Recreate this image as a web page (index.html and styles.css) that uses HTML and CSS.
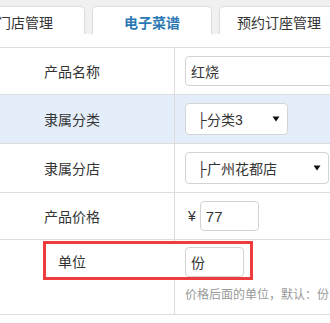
FILE: index.html
```html
<!DOCTYPE html>
<html lang="zh-CN">
<head>
<meta charset="utf-8">
<link rel="stylesheet" href="styles.css">
</head>
<body>
<div class="tabs">
  <div class="tab">门店管理</div>
  <div class="tab active">电子菜谱</div>
  <div class="tab">预约订座管理</div>
</div>
<div class="form">
  <div class="row">
    <div class="label">产品名称</div>
    <div class="value"><div class="input wide">红烧</div></div>
  </div>
  <div class="row alt">
    <div class="label">隶属分类</div>
    <div class="value">
      <div class="select s1"><span>├分类3</span><svg width="8" height="6" viewBox="0 0 8 6"><path d="M0.5 0.5H7.5L4 5.5Z" fill="#111"/></svg></div>
    </div>
  </div>
  <div class="row">
    <div class="label">隶属分店</div>
    <div class="value">
      <div class="select s2"><span>├广州花都店</span><svg width="8" height="6" viewBox="0 0 8 6"><path d="M0.5 0.5H7.5L4 5.5Z" fill="#111"/></svg></div>
    </div>
  </div>
  <div class="row">
    <div class="label">产品价格</div>
    <div class="value price"><span class="yen">¥</span><div class="input num">77</div></div>
  </div>
  <div class="row unit">
    <div class="label span"></div>
    <div class="highlight">
      <div class="hl-label">单位</div>
      <div class="input small">份</div>
    </div>
    <div class="help">价格后面的单位，默认：份</div>
  </div>
</div>
</body>
</html>
```

FILE: styles.css
```css
html, body {
  margin: 0;
  padding: 0;
  overflow: hidden;
  background: #fff;
}
body {
  font-family: "Liberation Sans", "Noto Sans CJK SC", sans-serif;
  font-size: 14px;
  color: #333;
  width: 330px;
}
.tabs {
  display: flex;
  gap: 7px;
  height: 34px;
  box-sizing: border-box;
  padding-top: 6px;
  background: #f0f0f0;
  margin-left: -35px;
}
.tab {
  flex: 0 0 120px;
  height: 28px;
  box-sizing: border-box;
  background: #fff;
  border: 1px solid #dcdcdc;
  border-bottom: none;
  border-radius: 5px 5px 0 0;
  text-align: center;
  padding-top: 7px;
  line-height: 18px;
  color: #333;
  white-space: nowrap;
}
.tab.active {
  color: #2c78b4;
  font-weight: bold;
}
.form {
  margin-top: 13px;
  border-top: 1px solid #dddddd;
}
.row {
  display: grid;
  grid-template-columns: 175px 1fr;
  border-bottom: 1px solid #dddddd;
}
.row.alt {
  background: #e4eefa;
}
.label {
  box-sizing: border-box;
  border-right: 1px solid #dddddd;
  padding-left: 44px;
  display: flex;
  align-items: center;
}
.value {
  padding: 8px 0 8px 10px;
  display: flex;
  align-items: center;
}
.input {
  box-sizing: border-box;
  height: 30px;
  border: 1px solid #d4d4d4;
  border-radius: 4px;
  padding-left: 5px;
  display: flex;
  align-items: center;
  background: #fff;
  color: #333;
}
.input.wide { width: 200px; }
.input.num { width: 59px; font-size: 15px; }
.input.small { width: 59px; }
.select {
  box-sizing: border-box;
  height: 32px;
  border: 1px solid #d4d4d4;
  border-radius: 4px;
  background: #fff;
  padding: 0 7px 0 11px;
  display: flex;
  align-items: center;
  justify-content: space-between;
}
.s1 { width: 103px; }
.s2 { width: 144px; }
.price .yen {
  margin: 0 4px 0 3px;
}
.row.unit {
  grid-template-rows: auto auto;
}
.label.span {
  grid-column: 1;
  grid-row: 1 / 3;
}
.highlight {
  grid-column: 1 / -1;
  grid-row: 1;
  justify-self: start;
  margin: 1px 0 0 43px;
  width: 210px;
  height: 39px;
  box-sizing: border-box;
  border: 3px solid #ef3c3c;
  background: #fff;
  display: flex;
  align-items: center;
}
.hl-label {
  width: 139px;
  box-sizing: border-box;
  padding-left: 12px;
}
.highlight .input {
  margin-top: 2px;
}
.help {
  grid-column: 2;
  grid-row: 2;
  padding: 7px 0 11px 10px;
  font-size: 12px;
  line-height: 16px;
  color: #999;
  white-space: nowrap;
}
```
